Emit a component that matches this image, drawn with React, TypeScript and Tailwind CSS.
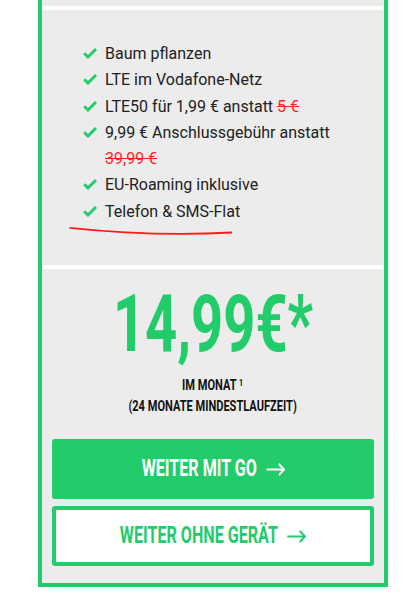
import { Fragment } from 'react'

type Feature = {
    text: string
    old?: string
}

const features: Feature[] = [
    { text: "Baum pflanzen" },
    { text: "LTE im Vodafone-Netz" },
    { text: "LTE50 für 1,99 € anstatt", old: "5 €" },
    { text: "9,99 € Anschlussgebühr anstatt", old: "39,99 €" },
    { text: "EU-Roaming inklusive" },
    { text: "Telefon & SMS-Flat" },
]

const CheckIcon = () => (
    <svg width="14" height="11" viewBox="0 0 14 11" className="shrink-0 mt-[7px]">
        <polyline points="1.2,5.2 5,9 13,1" fill="none" stroke="#22cc6a" strokeWidth="2.9" />
    </svg>
)

const Arrow = ({ color }: { color: string }) => (
    <svg width="27" height="13" viewBox="0 0 27 13" preserveAspectRatio="none">
        <path d="M0 6.5 H25 M18 1 L25.5 6.5 L18 12" fill="none" stroke={color} strokeWidth="2.2" />
    </svg>
)

const App = () => {
    return (
        <div className="min-h-[603px] bg-white font-['Roboto',sans-serif] text-[#222]">
            <div className="ml-[38px] w-[350px] border-4 border-t-0 border-[#22cc6a] bg-[#ececec]">
                <div className="h-[6px]" />
                <div className="h-[4px] bg-white" />

                {/* Features */}
                <div className="h-[255px] pt-[31px]">
                    <ul className="flex flex-col pl-[41px] pr-[41px] text-[16px] leading-[26.3px]">
                        {features.map((f) => (
                            <li key={f.text} className="flex gap-[8px]">
                                <CheckIcon />
                                <span>
                                    {f.text}
                                    {f.old && (
                                        <Fragment>
                                            {" "}
                                            <span className="text-[#ff1f1f] line-through">{f.old}</span>
                                        </Fragment>
                                    )}
                                </span>
                            </li>
                        ))}
                    </ul>
                    <svg width="164" height="10" viewBox="0 0 164 10" className="mt-[1px] ml-[27px] block">
                        <path d="M0.5 1.8 C 40 6, 95 10, 163 6.5" fill="none" stroke="#ff1a1a" strokeWidth="1.8" />
                    </svg>
                </div>

                <div className="h-[4px] bg-white" />

                {/* Price */}
                <div className="flex flex-col items-center px-[10px] pt-[16px] pb-[17px]">
                    <p className="scale-x-[0.71] text-[79px] leading-none font-bold text-[#22cc6a]">
                        14,99€*
                    </p>
                    <div className="mt-[11px] scale-x-[0.79] text-center text-[14px] leading-[21px] font-bold uppercase text-[#111]">
                        <p>
                            Im Monat <sup className="text-[9px]">1</sup>
                        </p>
                        <p>(24 Monate Mindestlaufzeit)</p>
                    </div>

                    <button className="mt-[22px] flex h-[60px] w-full items-center justify-center rounded-[3px] bg-[#22cc6a]">
                        <span className="flex scale-x-[0.7] items-center gap-[13px] text-[23px] font-bold uppercase text-white">
                            Weiter mit GO
                            <Arrow color="#ffffff" />
                        </span>
                    </button>

                    <button className="mt-[7px] flex h-[60px] w-full items-center justify-center rounded-[3px] border-4 border-[#22cc6a] bg-white">
                        <span className="flex scale-x-[0.7] items-center gap-[13px] text-[23px] font-bold uppercase text-[#22cc6a]">
                            Weiter ohne Gerät
                            <Arrow color="#22cc6a" />
                        </span>
                    </button>
                </div>
            </div>
        </div>
    )
}

export default App
